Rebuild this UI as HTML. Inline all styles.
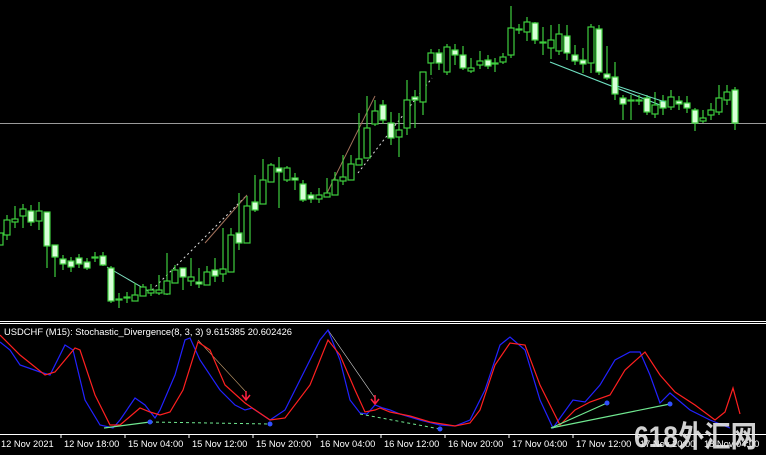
<!DOCTYPE html>
<html><head><meta charset="utf-8"><style>
html,body{margin:0;padding:0;background:#000;width:766px;height:455px;overflow:hidden}
svg{display:block}
.t{font-family:"Liberation Sans",sans-serif;font-size:9.3px;fill:#fff}
</style></head><body>
<svg width="766" height="455" viewBox="0 0 766 455" xmlns="http://www.w3.org/2000/svg">
<rect width="766" height="455" fill="#000"/>
<line x1="0" y1="123.5" x2="766" y2="123.5" stroke="#9a9a9a" stroke-width="1"/>
<line x1="107" y1="267" x2="150" y2="292" stroke="#7fe0c0" stroke-width="1"/>
<line x1="152" y1="290" x2="245" y2="197" stroke="#ddd" stroke-width="1" stroke-dasharray="2,3"/>
<line x1="205" y1="243" x2="247" y2="195" stroke="#a0705a" stroke-width="1"/>
<line x1="327" y1="193" x2="375" y2="96" stroke="#a0705a" stroke-width="1"/>
<line x1="358" y1="173" x2="432" y2="78" stroke="#ddd" stroke-width="1" stroke-dasharray="2,3"/>
<line x1="550" y1="62" x2="660" y2="105" stroke="#6fe0c0" stroke-width="1.2"/>
<g stroke="#3ecf3e" stroke-width="1.2" fill="#000">
<path d="M0 233V245M7 215V240M15 206V228M23 204V228M31 205V226M39 202V230M47 212V268M55 245V277M63 255V270M71 257V272M79 254V268M87 258V270M95 252V262M103 252V266M111 266V303M119 293V308M127 292V303M135 283V298M143 284V296M151 284V296M159 275V295M167 253V295M175 265V280M183 268V290M191 258V286M199 268V288M207 266V280M215 258V282M223 228V282M231 228V255M239 193V250M247 196V212M255 175V212M263 159V193M271 163V176M279 157V208M287 166V182M295 173V190M303 180V202M311 192V203M319 188V203M327 178V197M335 172V186M343 155V185M351 155V175M359 113V165M367 96V130M375 100V126M383 100V124M391 112V145M399 113V157M407 80V135M415 90V128M423 72V115M431 49V75M439 49V70M447 44V75M455 44V65M463 46V70M471 58V73M480 51V69M488 55V69M495 58V72M503 53V64M511 6V58M519 24V34M527 17V41M535 22V44M543 27V55M551 25V59M559 24V55M567 25V60M575 45V65M583 48V73M591 24V73M599 25V75M607 46V80M615 62V100M623 95V120M631 95V120M639 95V105M647 95V115M655 92V118M663 95V115M671 90V110M679 96V110M687 96V113M695 108V131M703 110V123M711 103V120M719 85V115M727 85V105M735 87V130"/>
</g>
<g stroke="#3ecf3e" stroke-width="1.2" fill="#000">
<rect x="-3" y="233" width="6" height="12"/><rect x="4" y="220" width="6" height="15"/><rect x="12" y="219" width="6" height="3"/><rect x="20" y="209" width="6" height="7"/><rect x="36" y="211" width="6" height="10"/><rect x="132" y="295" width="6" height="6"/><rect x="140" y="287" width="6" height="9"/><rect x="148" y="290" width="6" height="3"/><rect x="156" y="290" width="6" height="3"/><rect x="164" y="281" width="6" height="13"/><rect x="172" y="270" width="6" height="13"/><rect x="188" y="277" width="6" height="4"/><rect x="204" y="272" width="6" height="13"/><rect x="220" y="269" width="6" height="5"/><rect x="228" y="235" width="6" height="37"/><rect x="244" y="206" width="6" height="37"/><rect x="260" y="180" width="6" height="24"/><rect x="268" y="165" width="6" height="17"/><rect x="284" y="168" width="6" height="12"/><rect x="316" y="195" width="6" height="4"/><rect x="324" y="193" width="6" height="4"/><rect x="332" y="180" width="6" height="15"/><rect x="340" y="177" width="6" height="4"/><rect x="348" y="164" width="6" height="16"/><rect x="356" y="159" width="6" height="6"/><rect x="364" y="128" width="6" height="30"/><rect x="372" y="111" width="6" height="13"/><rect x="396" y="130" width="6" height="7"/><rect x="404" y="100" width="6" height="28"/><rect x="420" y="72" width="6" height="30"/><rect x="428" y="53" width="6" height="10"/><rect x="444" y="47" width="6" height="25"/><rect x="468" y="68" width="6" height="3"/><rect x="477" y="61" width="6" height="4"/><rect x="500" y="57" width="6" height="5"/><rect x="508" y="28" width="6" height="27"/><rect x="516" y="29" width="6" height="1"/><rect x="524" y="22" width="6" height="10"/><rect x="540" y="42" width="6" height="1"/><rect x="548" y="40" width="6" height="8"/><rect x="556" y="34" width="6" height="17"/><rect x="588" y="27" width="6" height="36"/><rect x="628" y="100" width="6" height="1"/><rect x="636" y="100" width="6" height="1"/><rect x="652" y="105" width="6" height="9"/><rect x="668" y="97" width="6" height="10"/><rect x="700" y="118" width="6" height="3"/><rect x="708" y="110" width="6" height="5"/><rect x="716" y="98" width="6" height="14"/><rect x="724" y="92" width="6" height="8"/>
</g>
<g stroke="#3ecf3e" stroke-width="1.2" fill="#d8ffd8">
<rect x="28" y="211" width="6" height="11"/><rect x="44" y="212" width="6" height="34"/><rect x="52" y="245" width="6" height="12"/><rect x="60" y="259" width="6" height="5"/><rect x="68" y="261" width="6" height="6"/><rect x="76" y="258" width="6" height="6"/><rect x="84" y="262" width="6" height="6"/><rect x="92" y="257" width="6" height="1"/><rect x="100" y="256" width="6" height="9"/><rect x="108" y="268" width="6" height="33"/><rect x="116" y="299" width="6" height="1"/><rect x="124" y="297" width="6" height="1"/><rect x="180" y="268" width="6" height="9"/><rect x="196" y="282" width="6" height="2"/><rect x="212" y="270" width="6" height="6"/><rect x="236" y="233" width="6" height="10"/><rect x="252" y="202" width="6" height="8"/><rect x="276" y="168" width="6" height="4"/><rect x="292" y="178" width="6" height="2"/><rect x="300" y="184" width="6" height="16"/><rect x="308" y="195" width="6" height="4"/><rect x="380" y="105" width="6" height="15"/><rect x="388" y="123" width="6" height="15"/><rect x="412" y="97" width="6" height="3"/><rect x="436" y="53" width="6" height="10"/><rect x="452" y="50" width="6" height="5"/><rect x="460" y="55" width="6" height="13"/><rect x="485" y="60" width="6" height="6"/><rect x="492" y="63" width="6" height="1"/><rect x="532" y="23" width="6" height="17"/><rect x="564" y="36" width="6" height="17"/><rect x="572" y="55" width="6" height="6"/><rect x="580" y="60" width="6" height="4"/><rect x="596" y="29" width="6" height="43"/><rect x="604" y="74" width="6" height="4"/><rect x="612" y="77" width="6" height="17"/><rect x="620" y="98" width="6" height="6"/><rect x="644" y="98" width="6" height="14"/><rect x="660" y="101" width="6" height="7"/><rect x="676" y="101" width="6" height="3"/><rect x="684" y="103" width="6" height="5"/><rect x="692" y="110" width="6" height="13"/><rect x="732" y="90" width="6" height="33"/>
</g>
<line x1="617" y1="86" x2="665" y2="102" stroke="#6fe0c0" stroke-width="1"/>
<line x1="0" y1="321.5" x2="766" y2="321.5" stroke="#fff" stroke-width="1"/>
<line x1="0" y1="323.5" x2="766" y2="323.5" stroke="#fff" stroke-width="1"/>
<text class="t" x="4" y="335" textLength="288" lengthAdjust="spacingAndGlyphs">USDCHF (M15):  Stochastic_Divergence(8, 3, 3) 9.615385 20.602426</text>
<polyline fill="none" stroke="#d8d8d8" stroke-width="0.6" points="328,330 375,398"/>
<polyline fill="none" stroke="#c8a070" stroke-width="0.6" points="198,340 246,392"/>
<polyline fill="none" stroke="#2222ff" stroke-width="1.2" points="0,342 10,350 20,365 40,372 50,375 65,345 73,350 85,400 100,425 113,428 120,420 135,398 145,405 155,418 160,410 175,375 185,340 190,338 200,360 220,390 235,405 245,410 252,408 270,420 285,410 305,370 320,340 328,330 340,360 350,400 360,413 367,414 375,405 383,408 390,410 400,414 420,420 440,425 455,426 470,420 485,390 500,345 510,337 525,350 540,400 553,428 560,418 573,400 585,402 600,385 615,360 630,352 640,352 650,375 660,403 670,393 690,410 710,420 730,428"/>
<polyline fill="none" stroke="#ff2020" stroke-width="1.2" points="0,335 20,355 45,375 55,372 75,348 80,350 95,395 110,425 120,425 140,408 150,412 160,415 170,412 183,390 198,342 210,350 225,385 245,403 270,420 285,418 310,385 328,340 340,355 355,390 365,412 375,410 380,408 390,412 410,416 430,422 455,426 470,423 480,410 495,365 510,343 525,345 540,385 560,425 575,410 590,402 610,395 625,370 645,352 660,375 675,392 695,405 715,420 725,412 733,388 740,414"/>
<line x1="104" y1="428" x2="150" y2="422" stroke="#70e890" stroke-width="1.2"/>
<line x1="150" y1="422" x2="270" y2="424" stroke="#70e890" stroke-width="1" stroke-dasharray="3,3"/>
<line x1="360" y1="414" x2="440" y2="429" stroke="#70e890" stroke-width="1" stroke-dasharray="3,3"/>
<line x1="551" y1="428" x2="607" y2="403" stroke="#70e890" stroke-width="1.2"/>
<line x1="551" y1="428" x2="670" y2="404" stroke="#70e890" stroke-width="1.2"/>
<g fill="#3050ff"><circle cx="150" cy="422" r="2.5"/><circle cx="270" cy="424" r="2.5"/><circle cx="440" cy="429" r="2.5"/><circle cx="607" cy="403" r="2.5"/><circle cx="670" cy="404" r="2.5"/></g>
<g stroke="#ff2040" stroke-width="1.5" fill="none"><path d="M246 391V399M242 395L246 400L250 395"/><path d="M375 395V403M371 399L375 404L379 399"/></g>
<line x1="0" y1="434.5" x2="766" y2="434.5" stroke="#fff" stroke-width="1"/>
<path d="M61 434V438M125 434V438M189 434V438M253 434V438M317 434V438M381 434V438M445 434V438M509 434V438M573 434V438M637 434V438M701 434V438" stroke="#fff"/>
<text class="t" x="1" y="447">12 Nov 2021</text>
<text class="t" x="64" y="447">12 Nov 18:00</text>
<text class="t" x="128" y="447">15 Nov 04:00</text>
<text class="t" x="192" y="447">15 Nov 12:00</text>
<text class="t" x="256" y="447">15 Nov 20:00</text>
<text class="t" x="320" y="447">16 Nov 04:00</text>
<text class="t" x="384" y="447">16 Nov 12:00</text>
<text class="t" x="448" y="447">16 Nov 20:00</text>
<text class="t" x="512" y="447">17 Nov 04:00</text>
<text class="t" x="576" y="447">17 Nov 12:00</text>
<text class="t" x="640" y="447">17 Nov 20:00</text>
<text class="t" x="704" y="447">18 Nov 04:00</text>
<text x="634" y="447" textLength="123" lengthAdjust="spacingAndGlyphs" style="font-family:'Liberation Sans','Noto Sans CJK SC',sans-serif;font-weight:bold;font-size:30px;fill:#e8e8e8;fill-opacity:0.9">618外汇网</text>
</svg>
</body></html>
